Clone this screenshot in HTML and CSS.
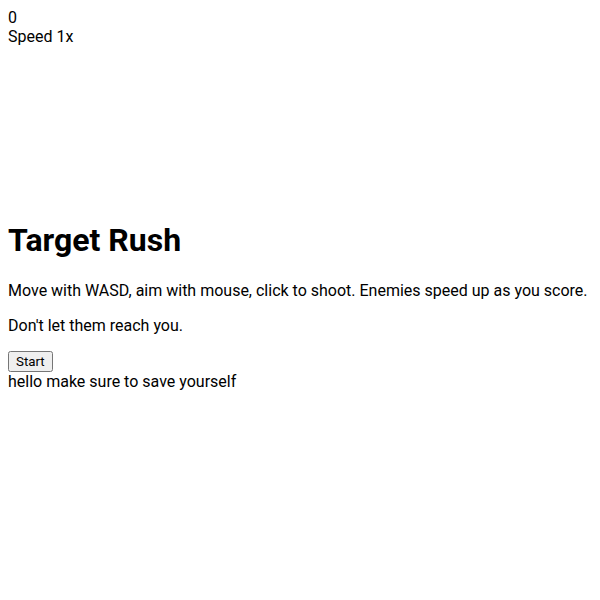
FILE: index.html
```html
<!DOCTYPE html>
<html>
<head>
<meta charset="utf-8">
<link rel="stylesheet" href="styles.css">
</head>
<body>
<div class="score">0</div>
<div class="speed">Speed 1x</div>
<canvas class="board" width="300" height="150"></canvas>
<h1 class="title">Target Rush</h1>
<p class="info">Move with WASD, aim with mouse, click to shoot. Enemies speed up as you score.</p>
<p class="info">Don't let them reach you.</p>
<button class="start">Start</button>
<div class="note">hello make sure to save yourself</div>
</body>
</html>
```
FILE: styles.css
```css
body {
  margin: 8px;
  font-family: Roboto, "Liberation Sans", sans-serif;
  font-size: 16px;
  color: #000;
  background: #fff;
}
.board {
  width: 300px;
  height: 150px;
}
.title {
  font-size: 32px;
  font-weight: bold;
  margin: 21.44px 0;
}
.info {
  margin: 16px 0;
}
.start {
  font-family: Roboto, "Liberation Sans", sans-serif;
  font-size: 13.333px;
}
```
